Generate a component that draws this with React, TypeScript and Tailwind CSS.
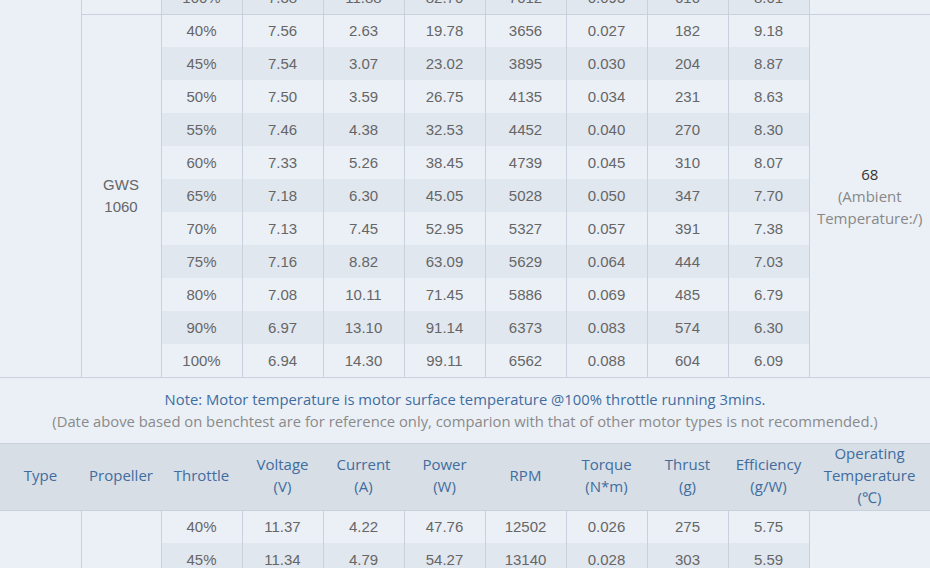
import React from "react";

type Row = string[];

const prevLast: Row = ["100%", "7.38", "11.88", "82.70", "7012", "0.093", "610", "8.01"];

const gws1060: Row[] = [
  ["40%", "7.56", "2.63", "19.78", "3656", "0.027", "182", "9.18"],
  ["45%", "7.54", "3.07", "23.02", "3895", "0.030", "204", "8.87"],
  ["50%", "7.50", "3.59", "26.75", "4135", "0.034", "231", "8.63"],
  ["55%", "7.46", "4.38", "32.53", "4452", "0.040", "270", "8.30"],
  ["60%", "7.33", "5.26", "38.45", "4739", "0.045", "310", "8.07"],
  ["65%", "7.18", "6.30", "45.05", "5028", "0.050", "347", "7.70"],
  ["70%", "7.13", "7.45", "52.95", "5327", "0.057", "391", "7.38"],
  ["75%", "7.16", "8.82", "63.09", "5629", "0.064", "444", "7.03"],
  ["80%", "7.08", "10.11", "71.45", "5886", "0.069", "485", "6.79"],
  ["90%", "6.97", "13.10", "91.14", "6373", "0.083", "574", "6.30"],
  ["100%", "6.94", "14.30", "99.11", "6562", "0.088", "604", "6.09"],
];

const nextGroup: Row[] = [
  ["40%", "11.37", "4.22", "47.76", "12502", "0.026", "275", "5.75"],
  ["45%", "11.34", "4.79", "54.27", "13140", "0.028", "303", "5.59"],
];

const headers: string[][] = [
  ["Type"],
  ["Propeller"],
  ["Throttle"],
  ["Voltage", "(V)"],
  ["Current", "(A)"],
  ["Power", "(W)"],
  ["RPM"],
  ["Torque", "(N*m)"],
  ["Thrust", "(g)"],
  ["Efficiency", "(g/W)"],
  ["Operating", "Temperature", "(℃)"],
];

const widths = [81, 80, 81, 81, 81, 81, 81, 81, 81, 81, 121];

const bd = "border border-[#c9d1dc]";
const num = "font-['Liberation_Sans',Arial,sans-serif] text-[15px] text-[#666]";
const open = "font-['Open_Sans',sans-serif]";

function DataCells({ row, dark, last }: { row: Row; dark: boolean; last?: boolean }) {
  return (
    <>
      {row.map((v, i) => (
        <td
          key={i}
          className={`border-x border-[#c9d1dc] ${last ? "border-b" : ""} ${num} h-[33px] p-0 pt-px text-center align-middle ${dark ? "bg-[#e1e7ef]" : "bg-[#ebf0f7]"}`}
        >
          {v}
        </td>
      ))}
    </>
  );
}

export default function App() {
  return (
    <div className="h-[568px] w-[930px] overflow-hidden bg-[#ebf0f7]">
      <table className="-mt-[19px] w-[930px] table-fixed border-collapse border-hidden">
        <colgroup>
          {widths.map((w, i) => (
            <col key={i} style={{ width: w }} />
          ))}
        </colgroup>
        <tbody>
          <tr>
            <td rowSpan={12} className={bd}></td>
            <td className={bd}></td>
            <DataCells row={prevLast} dark last />
            <td className={bd}></td>
          </tr>
          {gws1060.map((r, i) => (
            <tr key={i}>
              {i === 0 && (
                <td
                  rowSpan={11}
                  className={`${bd} ${num} text-center align-middle leading-[22px]`}
                >
                  GWS
                  <br />
                  1060
                </td>
              )}
              <DataCells row={r} dark={i % 2 === 1} last={i === gws1060.length - 1} />
              {i === 0 && (
                <td
                  rowSpan={11}
                  className={`${bd} ${open} text-center align-middle text-[15px] leading-[22px] text-[#888]`}
                >
                  <span className="text-[#333]">68</span>
                  <br />
                  (Ambient
                  <br />
                  Temperature:/)
                </td>
              )}
            </tr>
          ))}
          <tr>
            <td
              colSpan={11}
              className={`${bd} ${open} h-[66px] p-0 text-center align-middle text-[14.8px] leading-[22px]`}
            >
              <div className="text-[#3f6d9e]">
                Note: Motor temperature is motor surface temperature @100% throttle running 3mins.
              </div>
              <div className="text-[#8a8a8a]">
                (Date above based on benchtest are for reference only, comparion with that of other motor types is not recommended.)
              </div>
            </td>
          </tr>
          <tr className="bg-[#d7dee6]">
            {headers.map((h, i) => (
              <td
                key={i}
                className={`border-y border-[#c9d1dc] ${open} h-[67px] p-0 text-center align-middle text-[15px] leading-[22px] text-[#3f6d9e]`}
              >
                <div className="-mt-[3px]">
                  {h.map((l, j) => (
                    <div key={j}>{l}</div>
                  ))}
                </div>
              </td>
            ))}
          </tr>
          {nextGroup.map((r, i) => (
            <tr key={i}>
              {i === 0 && (
                <>
                  <td rowSpan={5} className={bd}></td>
                  <td rowSpan={5} className={bd}></td>
                </>
              )}
              <DataCells row={r} dark={i % 2 === 1} />
              {i === 0 && <td rowSpan={5} className={bd}></td>}
            </tr>
          ))}
        </tbody>
      </table>
    </div>
  );
}
